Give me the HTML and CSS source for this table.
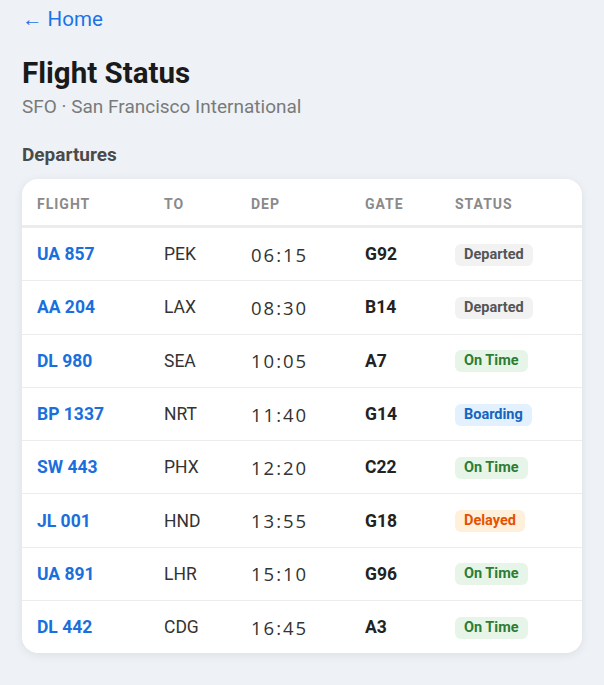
FILE: index.html
```html
<!DOCTYPE html>
<html lang="en">
<head>
    <meta charset="UTF-8">
    <meta name="viewport" content="width=device-width, initial-scale=1.0">
    <title>Flight Status</title>
    <link rel="stylesheet" href="styles.css">
</head>
<body>

    <a href="#" class="back-link">&larr; Home</a>

    <h1>Flight Status</h1>
    <p class="airport">SFO · San Francisco International</p>

    <h2>Departures</h2>

    <div class="board">
        <table>
            <colgroup>
                <col class="c-flight">
                <col class="c-to">
                <col class="c-dep">
                <col class="c-gate">
                <col class="c-status">
            </colgroup>
            <thead>
                <tr>
                    <th>Flight</th>
                    <th>To</th>
                    <th>Dep</th>
                    <th>Gate</th>
                    <th>Status</th>
                </tr>
            </thead>
            <tbody>
                <tr>
                    <td class="flight">UA 857</td>
                    <td>PEK</td>
                    <td class="time">06:15</td>
                    <td class="gate">G92</td>
                    <td><span class="badge departed">Departed</span></td>
                </tr>
                <tr>
                    <td class="flight">AA 204</td>
                    <td>LAX</td>
                    <td class="time">08:30</td>
                    <td class="gate">B14</td>
                    <td><span class="badge departed">Departed</span></td>
                </tr>
                <tr>
                    <td class="flight">DL 980</td>
                    <td>SEA</td>
                    <td class="time">10:05</td>
                    <td class="gate">A7</td>
                    <td><span class="badge on-time">On Time</span></td>
                </tr>
                <tr>
                    <td class="flight">BP 1337</td>
                    <td>NRT</td>
                    <td class="time">11:40</td>
                    <td class="gate">G14</td>
                    <td><span class="badge boarding">Boarding</span></td>
                </tr>
                <tr>
                    <td class="flight">SW 443</td>
                    <td>PHX</td>
                    <td class="time">12:20</td>
                    <td class="gate">C22</td>
                    <td><span class="badge on-time">On Time</span></td>
                </tr>
                <tr>
                    <td class="flight">JL 001</td>
                    <td>HND</td>
                    <td class="time">13:55</td>
                    <td class="gate">G18</td>
                    <td><span class="badge delayed">Delayed</span></td>
                </tr>
                <tr>
                    <td class="flight">UA 891</td>
                    <td>LHR</td>
                    <td class="time">15:10</td>
                    <td class="gate">G96</td>
                    <td><span class="badge on-time">On Time</span></td>
                </tr>
                <tr>
                    <td class="flight">DL 442</td>
                    <td>CDG</td>
                    <td class="time">16:45</td>
                    <td class="gate">A3</td>
                    <td><span class="badge on-time">On Time</span></td>
                </tr>
            </tbody>
        </table>
    </div>

</body>
</html>
```

FILE: styles.css
```css
body {
    font-family: Roboto, Arial, sans-serif;
    background-color: #eef2f7;
    color: #1a1a1a;
    margin: 0;
    padding: 7px 22px 30px;
}
.back-link {
    display: inline-block;
    color: #1a73e8;
    text-decoration: none;
    font-size: 20.5px;
    line-height: 24px;
}
.back-link:hover {
    text-decoration: underline;
}
h1 {
    font-size: 29.5px;
    line-height: 34px;
    font-weight: bold;
    margin: 25px 0 0;
    color: #1a1a1a;
}
.airport {
    font-size: 19px;
    line-height: 24px;
    color: #7a7a7a;
    margin: 5px 0 0;
}
h2 {
    font-size: 19px;
    line-height: 24px;
    font-weight: bold;
    color: #4a4a4a;
    margin: 24px 0 12px;
}
.board {
    background-color: white;
    border-radius: 16px;
    box-shadow: 0 2px 10px rgba(0, 0, 0, 0.08);
    overflow: hidden;
}
table {
    width: 100%;
    border-collapse: collapse;
    table-layout: fixed;
}
.c-flight { width: 127px; }
.c-to { width: 87px; }
.c-dep { width: 114px; }
.c-gate { width: 90px; }
th {
    text-align: left;
    font-size: 14px;
    line-height: 17px;
    font-weight: bold;
    letter-spacing: 1px;
    text-transform: uppercase;
    color: #8a8a8a;
    padding: 17px 15px 12px;
    border-bottom: 3px solid #ececec;
}
td {
    font-size: 17.5px;
    color: #333;
    padding: 0 15px;
    height: 52.3px;
    border-bottom: 1px solid #ececec;
}
tbody tr:last-child td {
    border-bottom: none;
}
.flight {
    color: #1a6fdc;
    font-weight: bold;
}
.time {
    font-family: "Open Sans", sans-serif;
    font-size: 18.5px;
    letter-spacing: 2px;
    font-variant-numeric: tabular-nums;
    color: #333;
}
.gate {
    font-weight: bold;
    color: #222;
}
.badge {
    display: inline-block;
    font-size: 14.5px;
    font-weight: bold;
    line-height: 16px;
    padding: 3px 9px;
    border-radius: 6px;
}
.departed {
    background-color: #f2f2f2;
    color: #555;
}
.on-time {
    background-color: #e7f5e9;
    color: #2e7d32;
}
.boarding {
    background-color: #e3f0fd;
    color: #1565c0;
}
.delayed {
    background-color: #fff0dc;
    color: #e65100;
}
```
